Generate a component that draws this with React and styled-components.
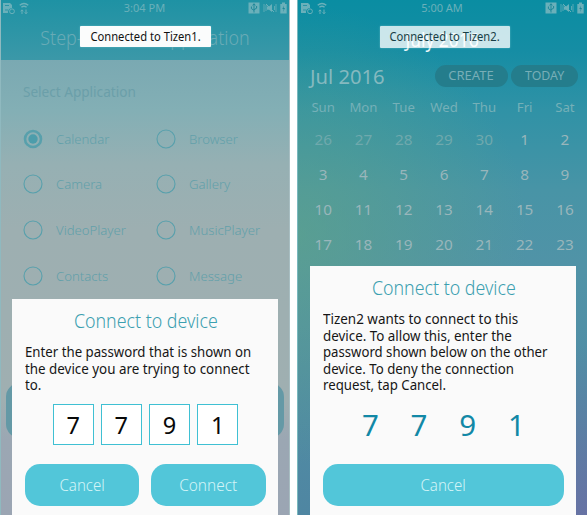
import React from 'react';
import styled, { createGlobalStyle, css } from 'styled-components';

const GlobalStyle = createGlobalStyle`
  * { box-sizing: border-box; }
  body { margin: 0; background: #fff; }
`;

const Stage = styled.main`
  display: flex;
  gap: 7px;
  width: 587px;
  height: 515px;
  overflow: hidden;
  font-family: "Noto Sans", "Open Sans", sans-serif;
`;

const Phone = styled.section`
  position: relative;
  flex: none;
  display: flex;
  flex-direction: column;
  width: 290px;
  height: 515px;
  overflow: hidden;
  ${(p) =>
    p.$calendar
      ? css`
          background:
            radial-gradient(ellipse 230px 230px at 0% 235px, rgba(96, 165, 134, 0.62), transparent),
            radial-gradient(ellipse 200px 170px at 100% 515px, rgba(106, 112, 164, 0.9), transparent),
            linear-gradient(#0a8da2 0, #158da4 50px, #3092a6 110px, #4894a6 190px, #5193a7 270px, #4f86a2 515px);
          border-left: 1px solid #79b8bd;
        `
      : css`
          background: linear-gradient(#7aa9b2 60px, #83afb5 110px, #96b0b3 165px, #9dafb1 230px, #9fafb1 400px, #9ba7b3 440px, #9ba5b3 515px);
          border-left: 1px solid #8fb9bf;
          border-right: 1px solid #a8bec2;
        `}
`;

const Text = styled.span`
  display: inline-block;
  white-space: nowrap;
  transform: scaleX(${(p) => p.$fit || 1});
  transform-origin: ${(p) => p.$origin || 'center'};
`;

const StatusBar = styled.div`
  flex: none;
  display: grid;
  grid-template-columns: 1fr auto 1fr;
  align-items: center;
  height: 16px;
  padding: 0 ${(p) => p.$right || 2}px 0 2px;
  color: #6ab0ba;
  font-size: 11px;
  line-height: 16px;
`;

const StatusGroup = styled.div`
  display: flex;
  align-items: center;
  gap: 3px;
  justify-content: ${(p) => (p.$end ? 'flex-end' : 'flex-start')};
`;

const Header = styled.header`
  flex: none;
  height: 60px;
  margin: 0 -1px;
  background: linear-gradient(#1e92a4, #3b98a8);
`;

const HeaderTitle = styled.h1`
  margin: 6px 0 0;
  text-align: center;
  color: #69abb6;
  font-size: 20px;
  font-weight: 300;
  line-height: 32px;
`;

const MonthHeading = styled(HeaderTitle)`
  margin: 8px 0 1px;
  color: #f0fafb;
  font-weight: 400;
`;

const Toast = styled.div`
  position: absolute;
  top: 26px;
  left: ${(p) => (p.$calendar ? 82 : 79)}px;
  display: flex;
  align-items: center;
  justify-content: center;
  width: ${(p) => (p.$calendar ? 130 : 131)}px;
  height: ${(p) => (p.$calendar ? 22 : 21)}px;
  border-radius: 1px;
  background: ${(p) => (p.$calendar ? 'rgba(255,255,255,0.78)' : '#fbfcfc')};
  box-shadow: 0 0 2px #61b9c6;
  color: ${(p) => (p.$calendar ? '#183e45' : '#111')};
  font-size: 12.3px;
  line-height: 20px;
`;

const SectionLabel = styled.div`
  margin: 21px 0 0 22px;
  color: #6b9fa9;
  font-size: 14px;
  line-height: 22px;
`;

const Options = styled.div`
  display: grid;
  grid-template-columns: 133px 1fr;
  grid-auto-rows: 45.6px;
  margin: 13px 0 0 22px;
`;

const Option = styled.div`
  display: flex;
  align-items: center;
  gap: 12.5px;
  color: #62a0aa;
  font-size: 13.4px;
  font-weight: 300;
`;

const RadioIcon = styled.svg`
  flex: none;
  width: 20px;
  height: 20px;
  fill: none;
  stroke: #58a0ac;
`;

const LaunchButton = styled.div`
  flex: none;
  width: 278px;
  height: 55px;
  margin: 85px 0 0 5px;
  border-radius: 14px;
  background: #6499a6;
`;

const Dialog = styled.div`
  position: absolute;
  left: ${(p) => (p.$calendar ? 12.4 : 11.4)}px;
  top: ${(p) => (p.$calendar ? 266 : 299)}px;
  bottom: 0;
  width: 266px;
  padding: 8px 12.5px 0;
  background: #fafafa;
`;

const DialogTitle = styled.h2`
  margin: 0 0 9px;
  text-align: center;
  color: #3b9fb0;
  font-size: 20px;
  font-weight: 300;
  line-height: 28px;
`;

const Message = styled.div`
  display: flex;
  flex-direction: column;
  align-items: flex-start;
  color: #161616;
  font-size: 14px;
  line-height: 16.6px;
`;

const CodeBoxes = styled.div`
  display: flex;
  justify-content: center;
  gap: 7px;
  margin-top: 10px;
`;

const CodeBox = styled.div`
  width: 41.2px;
  height: 41px;
  border: 1px solid #3fc0d3;
  background: #fff;
  color: #080808;
  font-size: 23.5px;
  line-height: 40px;
  text-align: center;
`;

const CodeDigits = styled.div`
  display: grid;
  grid-template-columns: repeat(4, 48.7px);
  justify-content: center;
  margin-top: 10px;
  color: #1288a6;
  font-size: 29.5px;
  line-height: 41px;
  text-align: center;
`;

const Actions = styled.div`
  display: flex;
  gap: 12px;
  margin-top: ${(p) => p.$top}px;
`;

const Button = styled.button`
  flex: 1;
  height: 42px;
  padding: 0;
  border: 0;
  border-radius: 15px;
  background: #52c6d9;
  color: #d2f4f7;
  font: 300 16px/40px "Noto Sans", sans-serif;
`;

const CalendarBar = styled.div`
  display: flex;
  align-items: center;
  margin-top: 8px;
  padding-left: 12px;
  height: 22px;
`;

const MonthLabel = styled.div`
  flex: 1;
  padding-top: 2px;
  color: #85b9bf;
  font-size: 20px;
  line-height: 22px;
`;

const Pill = styled.div`
  width: ${(p) => p.$width}px;
  height: 22px;
  margin-right: ${(p) => p.$gap}px;
  border-radius: 11px;
  background: #247d8c;
  color: #77aeb7;
  font-size: 13px;
  line-height: 21px;
  text-align: center;
`;

const MonthGrid = styled.div`
  display: grid;
  grid-template-columns: repeat(7, 40.3px);
  margin: 9px 0 0 5px;
  text-align: center;
`;

const Weekday = styled.div`
  height: 26px;
  color: #75b0b8;
  font-size: 13.2px;
  line-height: 22px;
`;

const Day = styled.div`
  height: 35px;
  color: ${(p) => (p.$muted ? '#6fa9ad' : '#99b6bb')};
  font-size: 15.3px;
  line-height: 35px;
`;

function FileIcon() {
  return (
    <svg width="14" height="13" viewBox="0 0 14 13">
      <path d="M1 1h7l2 2v3a4 4 0 0 0-4 5H1z" fill="#6ab0ba" />
      <path d="M3 3.5h4M3 8h3" stroke="#2994a6" fill="none" />
      <circle cx="10" cy="9.3" r="2.4" fill="none" stroke="#6ab0ba" />
    </svg>
  );
}

function WifiIcon() {
  return (
    <svg width="10" height="13" viewBox="0 0 10 13" fill="none" stroke="#6ab0ba">
      <path d="M.7 3.3Q5-.2 9.3 3.3M2.4 5.3Q5 3.2 7.6 5.3" strokeWidth="1.4" />
      <path d="M3 12V8M1.7 9.3 3 7.8l1.3 1.5M7 7.5v4M5.7 10.3 7 11.8l1.3-1.5" />
    </svg>
  );
}

function UsbIcon() {
  return (
    <svg width="12" height="12" viewBox="0 0 12 12">
      <rect x=".5" y=".5" width="11" height="11" fill="#6ab0ba" />
      <path d="M6 2v8.5M6 8.3 3.4 6.6V4.5M6 7.7l2.6-1.5V4M4.7 3.4 6 1.7l1.3 1.7" stroke="#1d8798" fill="none" />
    </svg>
  );
}

function MuteIcon() {
  return (
    <svg width="14" height="10" viewBox="0 0 14 10" fill="none" stroke="#6ab0ba">
      <path d="M1 1v8M13 1v8M3 2v6M11.5 3v4" strokeWidth=".8" />
      <path d="M4 3.5h2L9 1v8L6 6.7H4z" fill="#6ab0ba" stroke="none" />
      <path d="m3 1 8 8" />
    </svg>
  );
}

function BatteryIcon() {
  return (
    <svg width="7" height="12" viewBox="0 0 7 12">
      <path d="M2 .5h3V2h1.7v9.5H.3V2H2z" fill="#6ab0ba" />
      <path d="M4 3.5 2.3 7h1.4L3 10l2-4H3.6z" fill="#1d8798" />
    </svg>
  );
}

function Status({ time, right }) {
  return (
    <StatusBar $right={right}>
      <StatusGroup><FileIcon /><WifiIcon /></StatusGroup>
      <span>{time}</span>
      <StatusGroup $end><UsbIcon /><MuteIcon /><BatteryIcon /></StatusGroup>
    </StatusBar>
  );
}

function Radio({ checked }) {
  return (
    <RadioIcon viewBox="0 0 20 20">
      <circle cx="10" cy="10" r={checked ? 8 : 9} strokeWidth={checked ? 2.6 : 1.1} />
      {checked && <circle cx="10" cy="10" r="4.7" fill="#4c9dab" stroke="none" />}
    </RadioIcon>
  );
}

const APPS = ['Calendar', 'Browser', 'Camera', 'Gallery', 'VideoPlayer', 'MusicPlayer', 'Contacts', 'Message'];
const WEEKDAYS = ['Sun', 'Mon', 'Tue', 'Wed', 'Thu', 'Fri', 'Sat'];
const DAYS = [26, 27, 28, 29, 30, ...Array.from({ length: 23 }, (_, i) => i + 1)];
const CODE = ['7', '7', '9', '1'];

function Lines({ items }) {
  return (
    <Message>
      {items.map(([text, fit]) => (
        <Text key={text} $fit={fit} $origin="left">{text}</Text>
      ))}
    </Message>
  );
}

function LauncherPhone() {
  return (
    <Phone>
      <Header>
        <Status time="3:04 PM" right={3} />
        <HeaderTitle><Text $fit={0.895}>Step-1 : Select Application</Text></HeaderTitle>
      </Header>
      <SectionLabel><Text $fit={0.97} $origin="left">Select Application</Text></SectionLabel>
      <Options>
        {APPS.map((app, i) => (
          <Option key={app}>
            <Radio checked={i === 0} />
            <Text $fit={0.98} $origin="left">{app}</Text>
          </Option>
        ))}
      </Options>
      <LaunchButton />
      <Toast><Text $fit={0.91}>Connected to Tizen1.</Text></Toast>
      <Dialog>
        <DialogTitle><Text $fit={0.89}>Connect to device</Text></DialogTitle>
        <Lines items={[
          ['Enter the password that is shown on', 0.945],
          ['the device you are trying to connect', 0.955],
          ['to.', 0.95],
        ]} />
        <CodeBoxes>{CODE.map((d, i) => <CodeBox key={i}>{d}</CodeBox>)}</CodeBoxes>
        <Actions $top={19}>
          <Button><Text $fit={0.94}>Cancel</Text></Button>
          <Button><Text $fit={0.96}>Connect</Text></Button>
        </Actions>
      </Dialog>
    </Phone>
  );
}

function CalendarPhone() {
  return (
    <Phone $calendar>
      <Status time="5:00 AM" right={3} />
      <MonthHeading><Text $fit={0.87}>July 2016</Text></MonthHeading>
      <CalendarBar>
        <MonthLabel><Text $fit={1.01} $origin="left">Jul 2016</Text></MonthLabel>
        <Pill $width={73} $gap={3.5}>CREATE</Pill>
        <Pill $width={67} $gap={9}><Text $fit={0.95}>TODAY</Text></Pill>
      </CalendarBar>
      <MonthGrid>
        {WEEKDAYS.map((d) => <Weekday key={d}>{d}</Weekday>)}
        {DAYS.map((d, i) => <Day key={i} $muted={i < 5}>{d}</Day>)}
      </MonthGrid>
      <Toast $calendar><Text $fit={0.91}>Connected to Tizen2.</Text></Toast>
      <Dialog $calendar>
        <DialogTitle><Text $fit={0.89}>Connect to device</Text></DialogTitle>
        <Lines items={[
          ['Tizen2 wants to connect to this', 0.96],
          ['device. To allow this, enter the', 0.955],
          ['password shown below on the other', 0.94],
          ['device. To deny the connection', 0.945],
          ['request, tap Cancel.', 0.945],
        ]} />
        <CodeDigits>{CODE.map((d, i) => <span key={i}>{d}</span>)}</CodeDigits>
        <Actions $top={19}>
          <Button><Text $fit={0.94}>Cancel</Text></Button>
        </Actions>
      </Dialog>
    </Phone>
  );
}

export default function App() {
  return (
    <>
      <GlobalStyle />
      <Stage>
        <LauncherPhone />
        <CalendarPhone />
      </Stage>
    </>
  );
}
